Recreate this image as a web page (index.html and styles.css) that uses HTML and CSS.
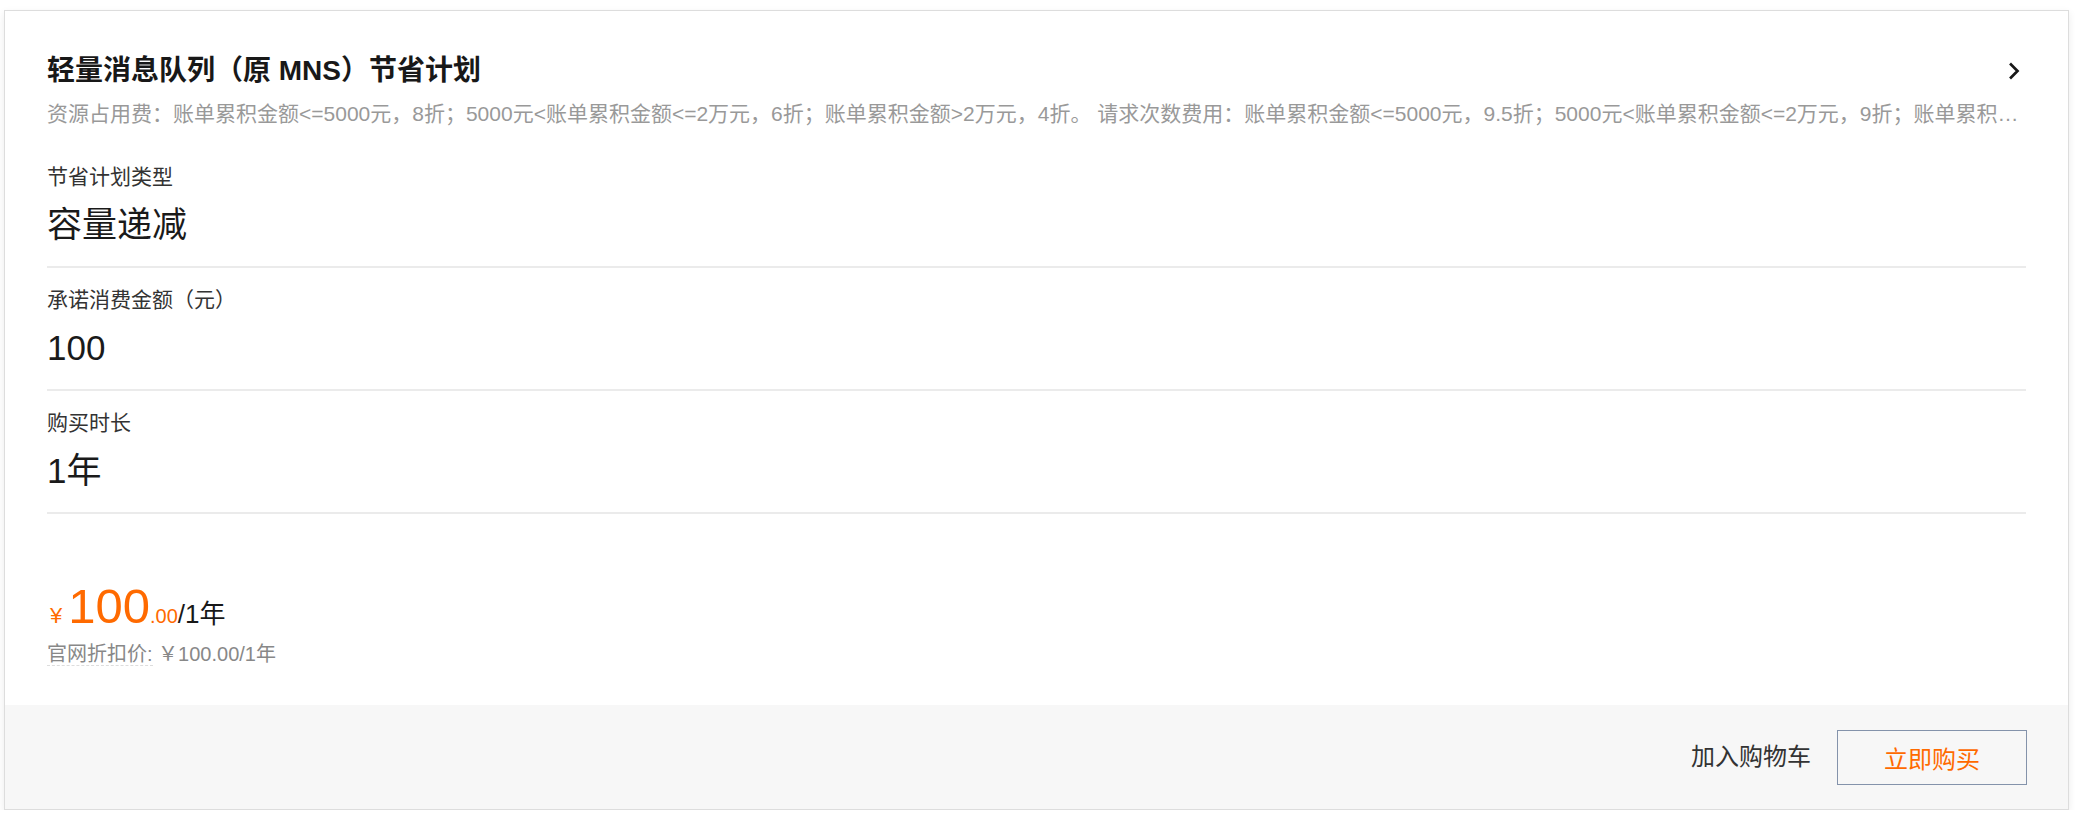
FILE: index.html
```html
<!DOCTYPE html>
<html lang="zh-CN">
<head>
<meta charset="utf-8">
<title>轻量消息队列（原 MNS）节省计划</title>
<link rel="stylesheet" href="styles.css">
</head>
<body>
<div class="card">
  <div class="card-body">
    <div class="header">
      <div class="title-row">
        <h1 class="title">轻量消息队列（原 MNS）节省计划</h1>
        <span class="chevron" aria-hidden="true">
          <svg width="14" height="20" viewBox="0 0 14 20"><polyline points="4,3.5 10.5,10 4,16.5" fill="none" stroke="#181818" stroke-width="2.7" stroke-linecap="square" stroke-linejoin="miter"/></svg>
        </span>
      </div>
      <p class="desc">资源占用费：账单累积金额&lt;=5000元，8折；5000元&lt;账单累积金额&lt;=2万元，6折；账单累积金额&gt;2万元，4折。 请求次数费用：账单累积金额&lt;=5000元，9.5折；5000元&lt;账单累积金额&lt;=2万元，9折；账单累积金额&gt;2万元，8折。</p>
    </div>
    <div class="field">
      <div class="field-label">节省计划类型</div>
      <div class="field-value">容量递减</div>
    </div>
    <div class="field">
      <div class="field-label">承诺消费金额（元）</div>
      <div class="field-value">100</div>
    </div>
    <div class="field">
      <div class="field-label">购买时长</div>
      <div class="field-value">1年</div>
    </div>
    <div class="price-block">
      <div class="price-row"><span class="price-symbol">¥</span><span class="price-int">100</span><span class="price-dec">.00</span><span class="price-unit">/1年</span></div>
      <div class="price-ref"><span class="price-ref-label">官网折扣价:</span> ￥100.00/1年</div>
    </div>
  </div>
  <div class="footer">
    <button class="btn-cart" type="button">加入购物车</button>
    <button class="btn-buy" type="button">立即购买</button>
  </div>
</div>
</body>
</html>
```

FILE: styles.css
```css
* {
  box-sizing: border-box;
}

html, body {
  margin: 0;
  padding: 0;
  background: #ffffff;
}

body {
  font-family: "Liberation Sans", "Noto Sans CJK SC", sans-serif;
  color: #333333;
}

.card {
  margin: 10px 6px 0 4px;
  border: 1px solid #dddddd;
  background: #ffffff;
  box-shadow: 0 3px 8px rgba(0, 0, 0, 0.08);
}

.card-body {
  padding: 40px 42px 37px;
}

.header {
  padding-bottom: 17px;
}

.title-row {
  display: flex;
  align-items: center;
  justify-content: space-between;
}

.title {
  margin: 0;
  font-size: 28px;
  line-height: 40px;
  font-weight: bold;
  color: #181818;
}

.chevron {
  display: flex;
  align-items: center;
  margin-right: 5px;
}

.desc {
  margin: 9px 0 0;
  font-size: 21px;
  line-height: 28px;
  color: #999999;
  white-space: nowrap;
  overflow: hidden;
  text-overflow: ellipsis;
}

.field {
  padding: 18px 0;
  border-bottom: 2px solid #ebebeb;
}

.field-label {
  font-size: 21px;
  line-height: 28px;
  color: #333333;
}

.field-value {
  margin-top: 11px;
  font-size: 35px;
  line-height: 46px;
  color: #1a1a1a;
}

.price-block {
  padding-top: 62px;
}

.price-row {
  font-size: 49px;
  line-height: 60px;
  white-space: nowrap;
}

.price-row span {
  line-height: 1;
}

.price-symbol {
  font-size: 22px;
  color: #ff6a00;
  margin-left: 3px;
  margin-right: 6px;
}

.price-int {
  font-size: 49px;
  color: #ff6a00;
}

.price-dec {
  font-size: 20px;
  color: #ff6a00;
}

.price-unit {
  font-size: 26px;
  color: #181818;
}

.price-ref {
  margin-top: 4px;
  font-size: 20px;
  line-height: 28px;
  color: #888888;
}

.price-ref-label {
  border-bottom: 1px dashed #dddddd;
}

.footer {
  height: 104px;
  background: #f7f7f7;
  display: flex;
  align-items: center;
  justify-content: flex-end;
  gap: 26px;
  padding-right: 41px;
}

.btn-cart {
  border: none;
  background: transparent;
  padding: 0;
  font-family: inherit;
  font-size: 24px;
  line-height: 32px;
  color: #333333;
}

.btn-buy {
  width: 190px;
  height: 55px;
  border: 1px solid #8493ab;
  background: transparent;
  padding: 0;
  font-family: inherit;
  font-size: 24px;
  color: #ff6a00;
}
```
